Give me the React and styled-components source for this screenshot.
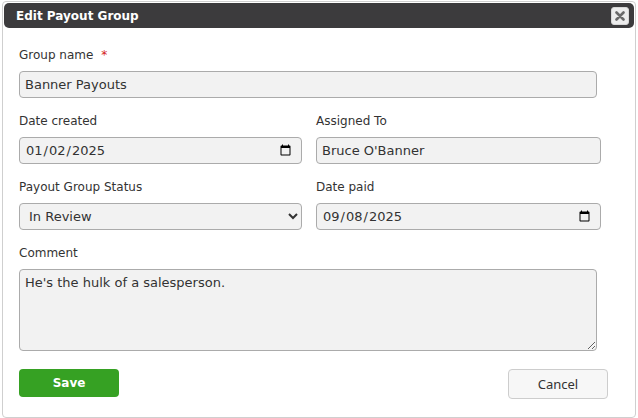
import React from "react";
import styled, { createGlobalStyle } from "styled-components";

const GlobalStyle = createGlobalStyle`
    html, body {
        margin: 0;
        padding: 0;
        background: #ffffff;
    }
    body {
        font-family: "DejaVu Sans", Verdana, sans-serif;
        color: #333;
    }
`;

const App = () => {
    return (
        <>
            <GlobalStyle />
            <Page>
                <Dialog>
                    <TitleBar>
                        <Title>Edit Payout Group</Title>
                        <CloseButton aria-label="Close">
                            <svg width="10" height="10" viewBox="0 0 10 10">
                                <path d="M1.5 1.5 L8.5 8.5 M8.5 1.5 L1.5 8.5" stroke="#6a6a6a" strokeWidth="2.6" strokeLinecap="round" />
                            </svg>
                        </CloseButton>
                    </TitleBar>
                    <Body>
                        <Grid>
                            <Field $full>
                                <Label>
                                    Group name <Required>*</Required>
                                </Label>
                                <Input $w={578} defaultValue="Banner Payouts" />
                            </Field>
                            <Field>
                                <Label>Date created</Label>
                                <Input $w={283} type="date" defaultValue="2025-01-02" />
                            </Field>
                            <Field>
                                <Label>Assigned To</Label>
                                <Input $w={285} defaultValue="Bruce O'Banner" />
                            </Field>
                            <Field>
                                <Label>Payout Group Status</Label>
                                <Select defaultValue="review">
                                    <option value="open">Open</option>
                                    <option value="review">In Review</option>
                                    <option value="paid">Paid</option>
                                </Select>
                            </Field>
                            <Field>
                                <Label>Date paid</Label>
                                <Input $w={285} type="date" defaultValue="2025-09-08" />
                            </Field>
                            <Field $full>
                                <Label>Comment</Label>
                                <TextArea defaultValue="He's the hulk of a salesperson." />
                            </Field>
                        </Grid>
                        <Footer>
                            <SaveButton>Save</SaveButton>
                            <CancelButton>Cancel</CancelButton>
                        </Footer>
                    </Body>
                </Dialog>
            </Page>
        </>
    );
};

export default App;

const Page = styled.div`
    padding: 1px 1px 0 2px;
`;

const Dialog = styled.div`
    width: 630px;
    height: 413px;
    border: 1px solid #cfcfcf;
    border-radius: 4px;
    padding: 1px;
    background: #fff;
`;

const TitleBar = styled.div`
    display: flex;
    align-items: center;
    justify-content: space-between;
    height: 25px;
    padding: 0 5px 0 12px;
    background: #3c3b3d;
    border-radius: 5px;
`;

const Title = styled.span`
    color: #fff;
    font-weight: bold;
    font-size: 12px;
`;

const CloseButton = styled.button`
    display: flex;
    align-items: center;
    justify-content: center;
    width: 18px;
    height: 18px;
    padding: 0;
    border: 1px solid #d6d6d6;
    border-radius: 3px;
    background: #ececec;
`;

const Body = styled.div`
    padding: 18px 15px 0 15px;
`;

const Grid = styled.div`
    display: grid;
    grid-template-columns: 283px 285px;
    column-gap: 14px;
    row-gap: 14px;
`;

const Field = styled.div`
    display: flex;
    flex-direction: column;
    grid-column: ${(p) => (p.$full ? "1 / -1" : "auto")};
`;

const Label = styled.label`
    height: 18px;
    line-height: 18px;
    font-size: 12px;
    color: #333;
    margin-bottom: 7px;
`;

const Required = styled.span`
    color: #d42020;
    margin-left: 4px;
`;

const fieldStyle = `
    box-sizing: border-box;
    height: 27px;
    border: 1px solid #ababab;
    border-radius: 4px;
    background-color: #f2f2f2;
    font-family: "DejaVu Sans", Verdana, sans-serif;
    font-size: 13px;
    color: #333;
    outline: none;
`;

const Input = styled.input`
    ${fieldStyle}
    width: ${(p) => p.$w}px;
    padding: 0 7px 0 5px;
`;

const Select = styled.select`
    ${fieldStyle}
    width: 283px;
    padding: 0 4px 0 5px;
`;

const TextArea = styled.textarea`
    ${fieldStyle}
    width: 578px;
    height: 82px;
    padding: 5px;
    resize: both;
`;

const Footer = styled.div`
    display: flex;
    justify-content: space-between;
    align-items: flex-start;
    width: 589px;
    margin-top: 18px;
`;

const SaveButton = styled.button`
    width: 100px;
    height: 28px;
    border: none;
    border-radius: 4px;
    background: #36a123;
    color: #fff;
    font-family: "DejaVu Sans", Verdana, sans-serif;
    font-weight: bold;
    font-size: 12px;
`;

const CancelButton = styled.button`
    width: 100px;
    height: 30px;
    border: 1px solid #cdcdcd;
    border-radius: 4px;
    background: #f7f7f7;
    color: #333;
    font-family: "Noto Sans", "Open Sans", sans-serif;
    font-size: 13px;
`;
